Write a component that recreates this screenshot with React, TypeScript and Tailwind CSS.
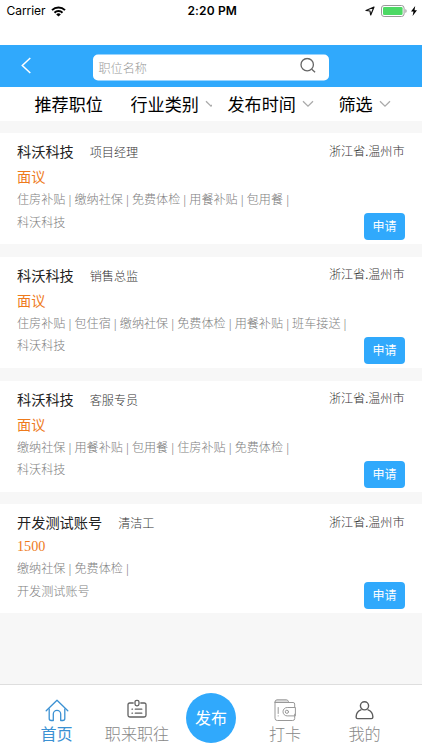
import React from "react";

type Job = {
  company: string;
  role: string;
  salary: string;
  tags: string[];
};

const jobs: Job[] = [
  { company: "科沃科技", role: "项目经理", salary: "面议", tags: ["住房补贴", "缴纳社保", "免费体检", "用餐补贴", "包用餐"] },
  { company: "科沃科技", role: "销售总监", salary: "面议", tags: ["住房补贴", "包住宿", "缴纳社保", "免费体检", "用餐补贴", "班车接送"] },
  { company: "科沃科技", role: "客服专员", salary: "面议", tags: ["缴纳社保", "用餐补贴", "包用餐", "住房补贴", "免费体检"] },
  { company: "开发测试账号", role: "清洁工", salary: "1500", tags: ["缴纳社保", "免费体检"] },
];

function StatusBar() {
  return (
    <div className="flex h-[45px] shrink-0 items-start bg-white font-['Inter','Liberation_Sans',sans-serif] text-black">
      <div className="flex h-[22px] flex-1 items-center gap-[6px] pl-[6.5px] text-[12px] tracking-[-0.05px]">
        <span>Carrier</span>
        <svg width="15" height="11" viewBox="0 0 15 11" fill="none" stroke="#000" strokeWidth="2">
          <path d="M1 4.1a9.3 9.3 0 0 1 13 0" />
          <path d="M3.5 6.7a5.7 5.7 0 0 1 8 0" />
          <path d="M7.5 10.6 5.2 8.4a3.2 3.2 0 0 1 4.6 0Z" fill="#000" stroke="none" />
        </svg>
      </div>
      <div className="flex h-[22px] items-center pl-px text-[12px] font-semibold tracking-[0.15px]">2:20 PM</div>
      <div className="flex h-[22px] flex-1 items-center justify-end pr-[5px]">
        <svg width="10" height="10" viewBox="0 0 10 10" fill="none" stroke="#111" strokeWidth="1.2" strokeLinejoin="round">
          <path d="M9 1 5.7 9 5 5 1 4.5Z" />
        </svg>
        <svg className="ml-[6px]" width="26" height="12" viewBox="0 0 26 12">
          <rect x="0.5" y="0.5" width="22.6" height="11" rx="2.6" fill="#fff" stroke="#999" />
          <rect x="2" y="2" width="19.6" height="8" rx="1.3" fill="#4cd964" />
          <path d="M24.4 4v4q1.2-.6 1.2-2t-1.2-2" fill="#999" />
        </svg>
        <svg className="ml-[4px]" width="6" height="10" viewBox="0 0 6 10" fill="#000">
          <path d="M4.2 0 0 5.6h2.5L1.6 10 6 4.2H3.5Z" />
        </svg>
      </div>
    </div>
  );
}

function Chevron() {
  return (
    <svg width="12" height="8" viewBox="0 0 12 8" fill="none" stroke="#aaa" strokeWidth="1.3">
      <path d="m1 1.2 5 5 5-5" />
    </svg>
  );
}

function SearchHeader() {
  return (
    <div className="flex h-[42px] shrink-0 items-center bg-[#30a9fc] pt-[3px]">
      <svg className="-mt-[4px] ml-[21px]" width="10" height="17" viewBox="0 0 10 17" fill="none" stroke="#fff" strokeWidth="1.5">
        <path d="M9.3 1 1.3 8.5l8 7.5" />
      </svg>
      <div className="ml-[62px] flex h-[26px] w-[235.5px] -translate-y-[0.5px] items-center justify-between rounded-[5px] bg-white pr-[13px] pl-[5.5px]">
        <span className="pt-[4px] text-[12.1px] font-light text-[#999]">职位名称</span>
        <svg className="-mt-[4px]" width="16" height="16" viewBox="0 0 16 16" fill="none" stroke="#666" strokeWidth="1.3">
          <circle cx="7.2" cy="7.2" r="6.2" />
          <path d="m11.7 11.7 3.4 3.1" />
        </svg>
      </div>
    </div>
  );
}

function Filters() {
  return (
    <div className="flex h-[34px] shrink-0 items-center bg-white pl-[34.5px] text-[17.1px] leading-[34px] whitespace-nowrap text-black">
      <span className="w-[96px] pt-[3px]">推荐职位</span>
      <div className="flex w-[81px] items-center gap-[6px] overflow-hidden">
        <span className="shrink-0 pt-[3px]">行业类别</span>
        <span className="shrink-0"><Chevron /></span>
      </div>
      <div className="ml-[16px] flex w-[111px] items-center gap-[6px]">
        <span className="pt-[3px]">发布时间</span>
        <Chevron />
      </div>
      <div className="flex items-center gap-[6px]">
        <span className="pt-[3px]">筛选</span>
        <Chevron />
      </div>
    </div>
  );
}

function JobCard({ job }: { job: Job }) {
  const numeric = /^\d+$/.test(job.salary);
  return (
    <article className="shrink-0 bg-white px-[17px] pt-[8px] pb-[4px]">
      <div className="flex h-[22px] items-center justify-between">
        <div className="flex items-center">
          <h2 className="text-[14.2px] leading-[22px] text-[#222]">{job.company}</h2>
          <span className="ml-[16px] pt-[2px] text-[12.1px] leading-[22px] font-light text-[#333]">{job.role}</span>
        </div>
        <span className="-mt-px mr-[0.5px] text-[12.1px] leading-[22px] font-light text-[#333]">浙江省.温州市</span>
      </div>
      <div className={numeric ? "h-[26px] text-[14.2px] leading-[25px] text-[#ee7a1b]" : "h-[28px] text-[14.2px] leading-[28px] text-[#ee7a1b]"}>
        {job.salary}
      </div>
      <div className="h-[18px] text-[12.1px] leading-[19px] font-light whitespace-nowrap text-[#808080] [word-spacing:0.3px]">
        {job.tags.map((tag) => `${tag} | `).join("")}
      </div>
      <div className="flex h-[31px] justify-between">
        <span className="pt-[4.5px] text-[12.1px] leading-[19px] font-light text-[#808080]">{job.company}</span>
        <button className="mt-[4px] h-[27px] w-[41px] rounded-[4px] bg-[#30a9fc] text-[12px] leading-[28px] text-white">申请</button>
      </div>
    </article>
  );
}

function TabBar() {
  return (
    <nav className="grid h-[66px] shrink-0 grid-cols-[113px_48px_100px_48px_113px] border-t border-[#dedede] bg-white text-[16.1px] leading-[25px] font-light whitespace-nowrap text-[#888]">
      <div className="flex flex-col items-center pt-[14px] text-[#3b91d3]">
        <svg width="24" height="23" viewBox="0 0 24 23" fill="none" stroke="currentColor" strokeWidth="1.3" strokeLinejoin="round" strokeLinecap="round">
          <path d="M1.2 11.7 12 1.2l10.8 10.5" />
          <path d="M4.2 10v9.5q0 2 2 2h2.1V15a3.7 3.7 0 0 1 7.4 0v6.5h2.1q2 0 2-2V10" />
        </svg>
        <span className="font-normal">首页</span>
      </div>
      <div className="flex flex-col items-center pt-[14px]">
        <svg width="20" height="23" viewBox="0 0 20 23" fill="none" stroke="#626262" strokeWidth="1.3" strokeLinecap="round">
          <path d="M6.2 4H2.8Q1 4 1 5.8v10.4Q1 18 2.8 18h14.4q1.8 0 1.8-1.8V5.8Q19 4 17.2 4h-3.4" />
          <rect x="8" y="1.3" width="4" height="5.6" rx="1.8" />
          <path d="M5 10.2h.5M8.3 10.2h6.5M5 14.2h.5M8.3 14.2h6.5" />
        </svg>
        <span>职来职往</span>
      </div>
      <div className="flex justify-center pt-[8px]">
        <span className="h-[50px] w-[50px] rounded-full bg-[#30a9fc] text-center text-[16px] leading-[52px] font-normal text-white">发布</span>
      </div>
      <div className="flex flex-col items-center pt-[14px]">
        <svg width="22" height="23" viewBox="0 0 22 23" fill="none" stroke="#999" strokeWidth="1" strokeLinecap="round">
          <path d="M1 3v16.2q0 2.3 2.3 2.3h15.4q2 0 2-2v-4.3M20.7 8.5V5q0-1.5-1.7-1.5h-4" />
          <path d="M1 3q0-2.2 2-2.2h9.5q1.3 0 1.8 1.5l.7 1.2H1" fill="#ddd" />
          <path d="M21 8.5h-7.8a4.2 4.2 0 0 0 0 8.4H21ZM4.2 8.5v6M4.2 16.8v.2" />
          <circle cx="12.9" cy="12.8" r="1.6" />
        </svg>
        <span>打卡</span>
      </div>
      <div className="flex flex-col items-center pt-[14px]">
        <svg className="-ml-[2px]" width="19" height="23" viewBox="0 0 19 23" fill="none" stroke="#5c5c5c" strokeWidth="1.4">
          <circle cx="9.5" cy="6.8" r="4.1" />
          <path d="M6.4 10.7C3.2 11.8 1.2 14.8 1.1 18q0 1.6 1.6 1.6h13.6q1.6 0 1.6-1.6c-.1-3.2-2.1-6.2-5.3-7.3" />
        </svg>
        <span className="-ml-[2px]">我的</span>
      </div>
    </nav>
  );
}

export default function App() {
  return (
    <div className="flex h-[750px] w-[422px] flex-col overflow-hidden bg-[#f7f7f7] font-['Liberation_Serif','Noto_Sans_CJK_SC',serif]">
      <StatusBar />
      <SearchHeader />
      <Filters />
      <main className="flex min-h-0 flex-1 flex-col gap-[12.7px] pt-[12.3px]">
        {jobs.map((job) => (
          <JobCard key={job.role} job={job} />
        ))}
      </main>
      <TabBar />
    </div>
  );
}
